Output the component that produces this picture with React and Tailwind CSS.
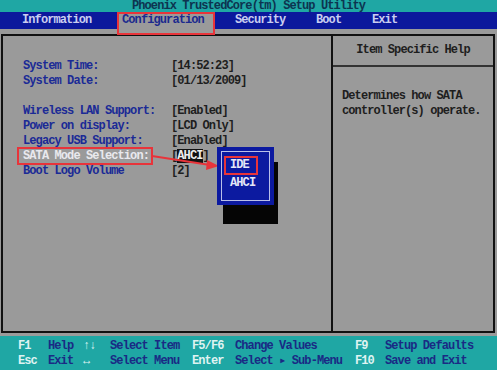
import React from "react";

const mono = { fontFamily: '"Liberation Mono", "DejaVu Sans Mono", monospace' };

const rows = [
  { label: "System Time:", value: "[14:52:23]" },
  { label: "System Date:", value: "[01/13/2009]" },
  null,
  { label: "Wireless LAN Support:", value: "[Enabled]" },
  { label: "Power on display:", value: "[LCD Only]" },
  { label: "Legacy USB Support:", value: "[Enabled]" },
  { label: "SATA Mode Selection:", value: "sata", active: true },
  { label: "Boot Logo Volume", value: "[2]" },
];

const keys = [
  ["F1", "Help", "↑↓", "Select Item", "F5/F6", "Change Values", "F9", "Setup Defaults"],
  ["Esc", "Exit", "↔", "Select Menu", "Enter", "Select ▸ Sub-Menu", "F10", "Save and Exit"],
];

export default function App() {
  return (
    <div
      className="relative w-[497px] h-[370px] overflow-hidden bg-[#9a9a9a] text-[12px] font-bold tracking-[-0.9px] leading-[15px] flex flex-col"
      style={mono}
    >
      {/* title */}
      <div className="h-[12px] bg-[#1fa7a4] text-[#0d3450] text-center leading-[12px]">
        Phoenix TrustedCore(tm) Setup Utility
      </div>

      {/* menu bar */}
      <div className="h-[17px] bg-[#0b189c] text-[#c9cdf0] flex items-center leading-[17px]">
        <div className="pl-[22px] w-[117px]">Information</div>
        <div className="relative w-[98px] h-full pl-[5px] bg-[#9a9a9a] text-[#1c2a8e]">
          Configuration
          <div className="absolute left-0 top-0 w-[98px] h-[23px] border-2 border-[#e8343a]" />
        </div>
        <div className="pl-[20px] w-[101px]">Security</div>
        <div className="w-[56px]">Boot</div>
        <div>Exit</div>
      </div>

      {/* main panel */}
      <div className="mt-[5px] ml-[1px] mr-[2px] h-[299px] border-2 border-[#111] flex">
        <div className="w-[330px] border-r-2 border-[#111] pt-[23px] pl-[20px]">
          {rows.map((r, i) =>
            r ? (
              <div key={i} className="flex h-[15px]">
                <div className={`w-[148px] ${r.active ? "text-[#e9e9ee]" : "text-[#1b2a96]"}`}>{r.label}</div>
                <div className="text-[#1e1e1e]">
                  {r.value === "sata" ? (
                    <span>
                      [<span className="bg-[#111] text-[#eee]">AHCI</span>]
                    </span>
                  ) : (
                    r.value
                  )}
                </div>
              </div>
            ) : (
              <div key={i} className="h-[15px]" />
            )
          )}
        </div>
        <div className="flex-1 flex flex-col text-[#1e1e1e]">
          <div className="h-[31px] border-b-2 border-[#333] flex items-center justify-center">
            Item Specific Help
          </div>
          <div className="pt-[22px] pl-[9px]">
            <div>Determines how SATA</div>
            <div>controller(s) operate.</div>
          </div>
        </div>
      </div>

      {/* footer */}
      <div className="mt-auto h-[34px] bg-[#1fa7a4] pt-[3px]">
        {keys.map((k, i) => (
          <div
            key={i}
            className="grid grid-cols-[18px_30px_35px_27px_82px_43px_120px_30px_1fr] h-[15px]"
          >
            <div />
            <div className="text-[#dff3f2]">{k[0]}</div>
            <div className="text-[#1a2a84]">{k[1]}</div>
            <div className="text-[#dff3f2]">{k[2]}</div>
            <div className="text-[#1a2a84]">{k[3]}</div>
            <div className="text-[#dff3f2]">{k[4]}</div>
            <div className="text-[#1a2a84]">{k[5]}</div>
            <div className="text-[#dff3f2]">{k[6]}</div>
            <div className="text-[#1a2a84]">{k[7]}</div>
          </div>
        ))}
      </div>

      {/* red box around SATA label */}
      <div className="absolute left-[17px] top-[147px] w-[136px] h-[18px] border-2 border-[#e8343a]" />

      {/* arrow */}
      <svg className="absolute left-0 top-0" width="497" height="370">
        <line x1="152" y1="156" x2="210" y2="165" stroke="#e8343a" strokeWidth="2" />
        <polygon points="219,166 207,160 206,170" fill="#e8343a" />
      </svg>

      {/* popup */}
      <div className="absolute left-[223px] top-[162px] w-[55px] h-[62px] bg-[#050505]" />
      <div className="absolute left-[217px] top-[147px] w-[57px] h-[58px] bg-[#0c1aa0] p-[4px]">
        <div className="h-full border border-[#b9bfe9] text-[#e4e6f6] pt-[4px] pl-[8px]">
          <div className="relative h-[18px] leading-[18px]">
            IDE
            <div className="absolute left-[-6px] top-0 w-[34px] h-[19px] border-2 border-[#e8343a]" />
          </div>
          <div className="leading-[18px]">AHCI</div>
        </div>
      </div>
    </div>
  );
}
